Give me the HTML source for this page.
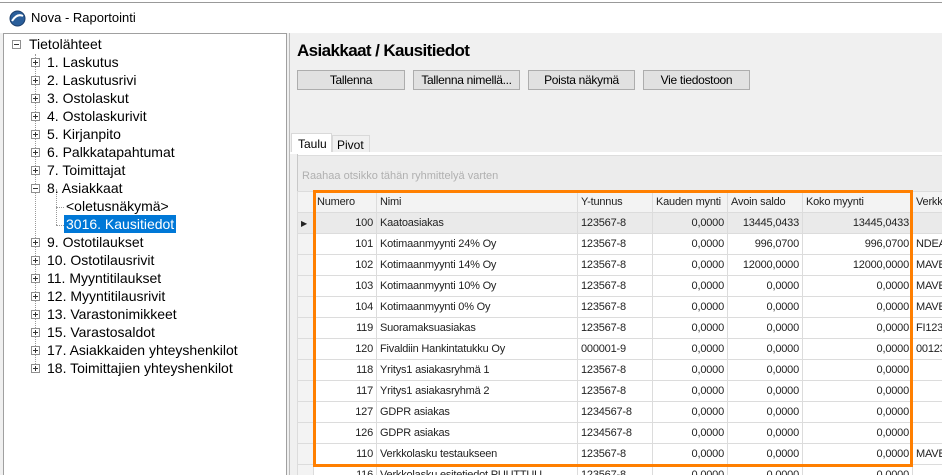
<!DOCTYPE html>
<html style="overflow:hidden;height:475px"><head><meta charset="utf-8"><style>
*{margin:0;padding:0;box-sizing:border-box}
body{width:942px;height:475px;overflow:hidden;background:#fff;font-family:"Liberation Sans","DejaVu Sans",sans-serif;position:relative}
#w{position:absolute;left:0;top:0;width:942px;height:475px;overflow:hidden}
.a{position:absolute}
.tree div{position:absolute;font-size:14px;color:#000;white-space:nowrap;line-height:18px}
.pb{position:absolute;width:9px;height:9px;border:1px solid #8f8f8f;background:#fff}
.pb:before{content:"";position:absolute;left:1px;top:3px;width:5px;height:1px;background:#333}
.pb.p:after{content:"";position:absolute;left:3px;top:1px;width:1px;height:5px;background:#333}
.btn{position:absolute;top:70px;height:20px;border:1px solid #adadad;background:#e1e1e1;font-size:12px;text-align:center;line-height:18px;letter-spacing:-.3px}
table{border-collapse:collapse;font-size:11px;letter-spacing:-.2px}
td{border:1px solid #dcdcdc;height:21px;padding:0 3px;white-space:nowrap;overflow:hidden;color:#222}
td.r{text-align:right}
tr.h td{background:#f3f3f3}
tr.s td{background:#eaeaea}
td.ind{background:#f3f3f3;width:16px}
</style></head><body><div id="w">
<div class="a" style="left:0;top:0;width:942px;height:3px;background:#fff;border-bottom:1px solid #999"></div>
<svg class="a" style="left:9px;top:10px" width="17" height="17" viewBox="0 0 17 17"><circle cx="8.5" cy="8.5" r="7.5" fill="#2a5e9a"/><circle cx="8.5" cy="8.5" r="7.5" fill="none" stroke="#1b3d6a"/><path d="M3 11 Q8 3 14 6" stroke="#fff" stroke-width="2" fill="none"/></svg>
<div class="a" style="left:31px;top:10px;font-size:13px">Nova - Raportointi</div>
<div class="a" style="left:0;top:33px;width:942px;height:442px;background:#f0f0f0"></div>
<div class="a" style="left:3px;top:33px;width:284px;height:442px;background:#fff;border:1px solid #a0a0a0;border-bottom:none"></div>
<div class="a" style="left:289px;top:33px;width:1px;height:442px;background:#bbb"></div>
<div class="tree">
<div class="pb" style="left:12px;top:40px"></div><div style="left:29px;top:35px">Tietolähteet</div>
<div class="a" style="left:35px;top:54px;width:0;height:318px;border-left:1px dotted #999"></div>
<div class="a" style="left:56px;top:189px;width:0;height:36px;border-left:1px dotted #999"></div>
<div class="a" style="left:56px;top:207px;width:8px;height:0;border-top:1px dotted #999"></div>
<div class="a" style="left:56px;top:225px;width:8px;height:0;border-top:1px dotted #999"></div>
<div class="pb p" style="left:31px;top:58px"></div><div style="left:47px;top:53px">1. Laskutus</div>
<div class="pb p" style="left:31px;top:76px"></div><div style="left:47px;top:71px">2. Laskutusrivi</div>
<div class="pb p" style="left:31px;top:94px"></div><div style="left:47px;top:89px">3. Ostolaskut</div>
<div class="pb p" style="left:31px;top:112px"></div><div style="left:47px;top:107px">4. Ostolaskurivit</div>
<div class="pb p" style="left:31px;top:130px"></div><div style="left:47px;top:125px">5. Kirjanpito</div>
<div class="pb p" style="left:31px;top:148px"></div><div style="left:47px;top:143px">6. Palkkatapahtumat</div>
<div class="pb p" style="left:31px;top:166px"></div><div style="left:47px;top:161px">7. Toimittajat</div>
<div class="pb" style="left:31px;top:184px"></div><div style="left:47px;top:179px">8. Asiakkaat</div>
<div style="left:66px;top:197px">&lt;oletusnäkymä&gt;</div>
<div style="left:64px;top:215px;background:#0078d7;color:#fff;padding:0 2px">3016. Kausitiedot</div>
<div class="pb p" style="left:31px;top:238px"></div><div style="left:47px;top:233px">9. Ostotilaukset</div>
<div class="pb p" style="left:31px;top:256px"></div><div style="left:47px;top:251px">10. Ostotilausrivit</div>
<div class="pb p" style="left:31px;top:274px"></div><div style="left:47px;top:269px">11. Myyntitilaukset</div>
<div class="pb p" style="left:31px;top:292px"></div><div style="left:47px;top:287px">12. Myyntitilausrivit</div>
<div class="pb p" style="left:31px;top:310px"></div><div style="left:47px;top:305px">13. Varastonimikkeet</div>
<div class="pb p" style="left:31px;top:328px"></div><div style="left:47px;top:323px">15. Varastosaldot</div>
<div class="pb p" style="left:31px;top:346px"></div><div style="left:47px;top:341px">17. Asiakkaiden yhteyshenkilot</div>
<div class="pb p" style="left:31px;top:364px"></div><div style="left:47px;top:359px">18. Toimittajien yhteyshenkilot</div>
</div>
<div class="a" style="left:297px;top:41px;font-size:17px;font-weight:bold;letter-spacing:-.6px">Asiakkaat / Kausitiedot</div>
<div class="btn" style="left:297px;width:108px">Tallenna</div>
<div class="btn" style="left:413px;width:107px">Tallenna nimellä...</div>
<div class="btn" style="left:528px;width:107px">Poista näkymä</div>
<div class="btn" style="left:643px;width:107px">Vie tiedostoon</div>
<div class="a" style="left:291px;top:133px;width:41px;height:21px;background:#fff;border:1px solid #d9d9d9;border-bottom:none;font-size:12px;padding:3px 0 0 6px">Taulu</div>
<div class="a" style="left:332px;top:135px;width:38px;height:18px;background:#f0f0f0;border:1px solid #d9d9d9;border-bottom:none;font-size:12px;padding:2px 0 0 4px">Pivot</div>
<div class="a" style="left:290px;top:152px;width:652px;height:2px;background:#fff"></div>
<div class="a" style="left:297px;top:154px;width:645px;height:321px;background:#fff;border-left:1px solid #c8c8c8"></div>
<div class="a" style="left:298px;top:155px;width:644px;height:36px;background:#ececec;border-top:1px solid #ddd"></div>
<div class="a" style="left:302px;top:170px;font-size:11px;color:#b0b0b0">Raahaa otsikko tähän ryhmittelyä varten</div>
<div class="a" style="left:297px;top:191px;width:645px;height:284px;overflow:hidden">
<table style="table-layout:fixed;width:660px">
<colgroup><col style="width:16px"><col style="width:63px"><col style="width:201px"><col style="width:75px"><col style="width:75px"><col style="width:75px"><col style="width:110px"><col style="width:45px"></colgroup>
<tr class="h"><td class="ind"></td><td>Numero</td><td>Nimi</td><td>Y-tunnus</td><td>Kauden mynti</td><td>Avoin saldo</td><td>Koko myynti</td><td>Verkk</td></tr>
<tr class="s"><td class="ind" style="font-size:8px">&#9654;</td><td class="r">100</td><td>Kaatoasiakas</td><td>123567-8</td><td class="r">0,0000</td><td class="r">13445,0433</td><td class="r">13445,0433</td><td></td></tr>
<tr><td class="ind"></td><td class="r">101</td><td>Kotimaanmyynti 24% Oy</td><td>123567-8</td><td class="r">0,0000</td><td class="r">996,0700</td><td class="r">996,0700</td><td>NDEA</td></tr>
<tr><td class="ind"></td><td class="r">102</td><td>Kotimaanmyynti 14% Oy</td><td>123567-8</td><td class="r">0,0000</td><td class="r">12000,0000</td><td class="r">12000,0000</td><td>MAVE</td></tr>
<tr><td class="ind"></td><td class="r">103</td><td>Kotimaanmyynti 10% Oy</td><td>123567-8</td><td class="r">0,0000</td><td class="r">0,0000</td><td class="r">0,0000</td><td>MAVE</td></tr>
<tr><td class="ind"></td><td class="r">104</td><td>Kotimaanmyynti 0% Oy</td><td>123567-8</td><td class="r">0,0000</td><td class="r">0,0000</td><td class="r">0,0000</td><td>MAVE</td></tr>
<tr><td class="ind"></td><td class="r">119</td><td>Suoramaksuasiakas</td><td>123567-8</td><td class="r">0,0000</td><td class="r">0,0000</td><td class="r">0,0000</td><td>FI123</td></tr>
<tr><td class="ind"></td><td class="r">120</td><td>Fivaldiin Hankintatukku Oy</td><td>000001-9</td><td class="r">0,0000</td><td class="r">0,0000</td><td class="r">0,0000</td><td>00123</td></tr>
<tr><td class="ind"></td><td class="r">118</td><td>Yritys1 asiakasryhmä 1</td><td>123567-8</td><td class="r">0,0000</td><td class="r">0,0000</td><td class="r">0,0000</td><td></td></tr>
<tr><td class="ind"></td><td class="r">117</td><td>Yritys1 asiakasryhmä 2</td><td>123567-8</td><td class="r">0,0000</td><td class="r">0,0000</td><td class="r">0,0000</td><td></td></tr>
<tr><td class="ind"></td><td class="r">127</td><td>GDPR asiakas</td><td>1234567-8</td><td class="r">0,0000</td><td class="r">0,0000</td><td class="r">0,0000</td><td></td></tr>
<tr><td class="ind"></td><td class="r">126</td><td>GDPR asiakas</td><td>1234567-8</td><td class="r">0,0000</td><td class="r">0,0000</td><td class="r">0,0000</td><td></td></tr>
<tr><td class="ind"></td><td class="r">110</td><td>Verkkolasku testaukseen</td><td>123567-8</td><td class="r">0,0000</td><td class="r">0,0000</td><td class="r">0,0000</td><td>MAVE</td></tr>
<tr><td class="ind"></td><td class="r">116</td><td>Verkkolasku esitetiedot PUUTTUU</td><td>123567-8</td><td class="r">0,0000</td><td class="r">0,0000</td><td class="r">0,0000</td><td></td></tr>
</table></div>
<div class="a" style="left:313px;top:190px;width:600px;height:277px;border:3px solid #ff7f00"></div>
</div></body></html>
